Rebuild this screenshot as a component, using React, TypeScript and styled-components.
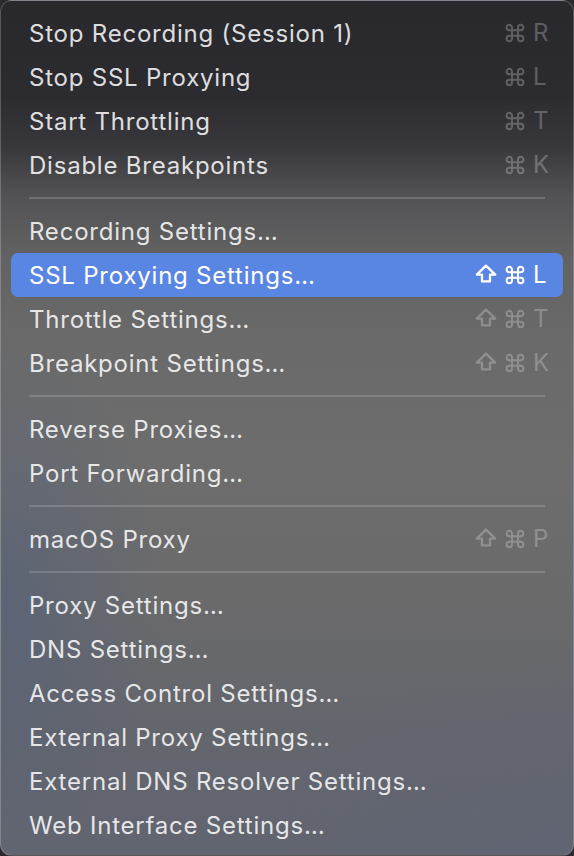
import React from "react";
import styled, { createGlobalStyle } from "styled-components";

const Global = createGlobalStyle`
  html, body { margin: 0; padding: 0; background: #2a2a2e; }
  body { font-family: Inter, "Noto Sans", "Liberation Sans", sans-serif; }
  #root { width: 574px; height: 856px; }
`;

const Menu = styled.div`
  box-sizing: border-box;
  width: 574px;
  height: 856px;
  padding: 10px 10px 10px 10px;
  border-radius: 12px;
  border: 1px solid rgba(255, 255, 255, 0.22);
  display: flex;
  flex-direction: column;
  overflow: hidden;
  background:
    radial-gradient(ellipse 160px 260px at 0% 70%, rgba(80, 95, 125, 0.55), transparent),
    radial-gradient(ellipse 300px 200px at 100% 100%, rgba(95, 100, 118, 0.5), transparent),
    linear-gradient(180deg, #28282d 0%, #2b2b30 11%, #38383c 17%, #535355 23%, #626263 30%, #6a6a6a 40%, #6d6d6d 55%, #6a6a6b 70%, #64666d 85%, #616570 100%);
`;

const Row = styled.div<{ $active?: boolean }>`
  flex: 0 0 44px;
  display: flex;
  align-items: center;
  justify-content: space-between;
  padding: 0 12px 0 18px;
  border-radius: 7px;
  background: ${(p) => (p.$active ? "#5a86e3" : "transparent")};
  color: ${(p) => (p.$active ? "#ffffff" : "rgba(255, 255, 255, 0.86)")};
`;

const Label = styled.span`
  font-size: 24px;
  letter-spacing: 0.78px;
  white-space: nowrap;
`;

const Shortcut = styled.span<{ $active?: boolean }>`
  display: grid;
  grid-template-columns: 22px 20px 18px;
  column-gap: 8px;
  align-items: center;
  color: ${(p) => (p.$active ? "#ffffff" : "rgba(255, 255, 255, 0.25)")};
`;

const Key = styled.span`
  font-size: 24px;
  line-height: 1;
  text-align: left;
`;

const Separator = styled.div`
  flex: 0 0 22px;
  display: flex;
  align-items: center;
  padding: 0 18px;
  &::after {
    content: "";
    flex: 1;
    height: 2px;
    background: rgba(255, 255, 255, 0.16);
  }
`;

const ShiftIcon = () => (
  <svg width="22" height="19" viewBox="0 0 22 19" fill="none">
    <path
      d="M11 1.6 L20.2 10.6 H15 V17.4 H7 V10.6 H1.8 Z"
      stroke="currentColor"
      strokeWidth="2.3"
      strokeLinejoin="round"
    />
  </svg>
);

const CmdIcon = () => (
  <svg width="20" height="20" viewBox="0 0 20 20" fill="none">
    <path
      d="M7 4.5v11a2.7 2.7 0 1 1-2.7-2.7h11.4a2.7 2.7 0 1 1-2.7 2.7v-11a2.7 2.7 0 1 1 2.7 2.7H4.3A2.7 2.7 0 1 1 7 4.5Z"
      stroke="currentColor"
      strokeWidth="2"
      strokeLinejoin="round"
    />
  </svg>
);

type Item =
  | { sep: true }
  | { label: string; key?: string; shift?: boolean; active?: boolean };

const items: Item[] = [
  { label: "Stop Recording (Session 1)", key: "R" },
  { label: "Stop SSL Proxying", key: "L" },
  { label: "Start Throttling", key: "T" },
  { label: "Disable Breakpoints", key: "K" },
  { sep: true },
  { label: "Recording Settings…" },
  { label: "SSL Proxying Settings…", key: "L", shift: true, active: true },
  { label: "Throttle Settings…", key: "T", shift: true },
  { label: "Breakpoint Settings…", key: "K", shift: true },
  { sep: true },
  { label: "Reverse Proxies…" },
  { label: "Port Forwarding…" },
  { sep: true },
  { label: "macOS Proxy", key: "P", shift: true },
  { sep: true },
  { label: "Proxy Settings…" },
  { label: "DNS Settings…" },
  { label: "Access Control Settings…" },
  { label: "External Proxy Settings…" },
  { label: "External DNS Resolver Settings…" },
  { label: "Web Interface Settings…" },
];

export default function App() {
  return (
    <>
      <Global />
      <Menu>
        {items.map((it, i) =>
          "sep" in it ? (
            <Separator key={i} />
          ) : (
            <Row key={i} $active={it.active}>
              <Label>{it.label}</Label>
              {it.key && (
                <Shortcut $active={it.active}>
                  <span>{it.shift && <ShiftIcon />}</span>
                  <CmdIcon />
                  <Key>{it.key}</Key>
                </Shortcut>
              )}
            </Row>
          )
        )}
      </Menu>
    </>
  );
}
